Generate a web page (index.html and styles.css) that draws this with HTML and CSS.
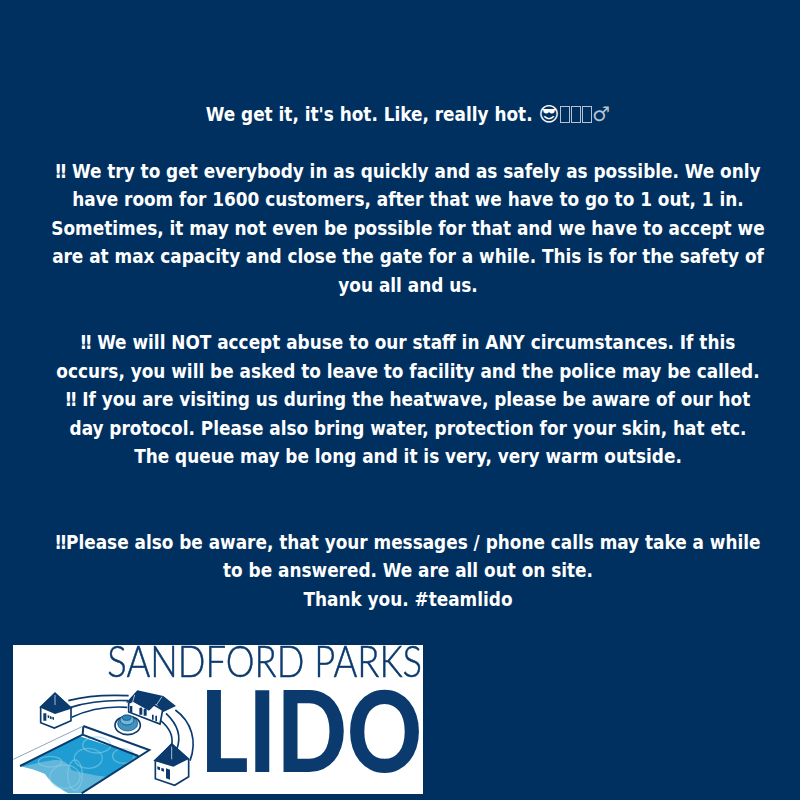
FILE: index.html
```html
<!DOCTYPE html>
<html lang="en">
<head>
<meta charset="utf-8">
<title>Sandford Parks Lido</title>
<link rel="stylesheet" href="styles.css">
</head>
<body>
<main class="poster">
  <p class="notice">We get it, it's hot. Like, really hot. <span class="glyphs">😎<span class="tofu"></span><span class="tofu"></span><span class="tofu"></span><span class="male">♂</span></span><br>
<br>
‼ We try to get everybody in as quickly and as safely as possible. We only<br>
have room for 1600 customers, after that we have to go to 1 out, 1 in.<br>
Sometimes, it may not even be possible for that and we have to accept we<br>
are at max capacity and close the gate for a while. This is for the safety of<br>
you all and us.<br>
<br>
‼ We will NOT accept abuse to our staff in ANY circumstances. If this<br>
occurs, you will be asked to leave to facility and the police may be called.<br>
‼ If you are visiting us during the heatwave, please be aware of our hot<br>
day protocol. Please also bring water, protection for your skin, hat etc.<br>
The queue may be long and it is very, very warm outside.<br>
<br>
<br>
‼Please also be aware, that your messages / phone calls may take a while<br>
to be answered. We are all out on site.<br>
Thank you. #teamlido</p>
  <svg class="logo" viewBox="39 45 1230 447" role="img" aria-label="Sandford Parks Lido logo">
    <rect class="paper" x="39" y="45" width="1230" height="447"/>
    <text class="logo-top" x="322" y="141" textLength="944" lengthAdjust="spacingAndGlyphs">SANDFORD PARKS</text>
    <text class="logo-main" x="600" y="425" textLength="666" lengthAdjust="spacingAndGlyphs">LIDO</text>

    <path class="water" d="M60 408 235 318 415 378 245 490H205C170 470 150 455 135 432 110 420 85 415 60 408Z"/>
    <path class="water-dark" d="M60 410 235 318 415 376 325 440C300 440 250 430 215 420 190 370 150 395 60 410Z"/>
    <g class="ripple">
      <ellipse cx="265" cy="385" rx="42" ry="30"/><ellipse cx="195" cy="440" rx="45" ry="35"/>
      <ellipse cx="290" cy="345" rx="42" ry="24"/><ellipse cx="370" cy="378" rx="32" ry="22"/>
      <ellipse cx="225" cy="435" rx="22" ry="45"/><ellipse cx="150" cy="395" rx="35" ry="16"/>
    </g>
    <path class="line" d="M250 288 448 360 245 490M250 288 248 314M248 314 415 378M60 408 248 314"/>
    <path class="line-soft" d="M40 388 250 288"/>

    <path class="thin" d="M205 212C265 196 325 194 386 197M212 232C270 214 330 210 384 212M215 262C270 236 325 228 382 232"/>
    <path class="thin" d="M526 240C575 275 592 335 570 392M498 250C535 285 545 320 530 358M482 272C510 295 520 320 515 345"/>

    <path class="wall" d="M122 232V278L163 294 213 272V236L165 190Z"/>
    <path class="roof" d="M165 187 118 232 165 252 218 235Z"/>
    <path class="roof" d="M130 250h9v22h-9zM143 255l5 2v8l-5-2zM150 258l5 2v8l-5-2zM157 260l5 2v8l-5-2z"/>

    <path class="wall" d="M386 220V246L480 282 488 240 420 200Z"/>
    <path class="roof" d="M378 218 412 181 490 198 528 228 490 246 468 222 447 242 400 216Z"/>
    <path class="roof" d="M390 228h7v20h-7zM418 235c3-4 9-3 9 2v17h-9zM431 238c3-4 9-3 9 2v17h-9zM456 254h5v15h-5zM466 257h5v17h-5z"/>
    <path class="white-line" d="M404 195 398 216M486 200 470 224"/>

    <ellipse class="wall" cx="383" cy="286" rx="38" ry="28"/>
    <ellipse class="pond" cx="383" cy="281" rx="30" ry="22"/>
    <ellipse class="pond-mid" cx="381" cy="270" rx="21" ry="15"/>
    <ellipse class="pond-top" cx="380" cy="263" rx="13" ry="8"/>

    <path class="wall" d="M466 394V446L524 466 566 440V388L515 342Z"/>
    <path class="roof" d="M515 340 460 392 520 410 568 386Z"/>
    <path class="roof" d="M472 409l8 3v9l-8-3zM484 413l8 3v9l-8-3zM498 415l12 4v30l-12-4z"/>
    <path class="white-line" d="M515 350V388M165 195V225"/>
  </svg>
</main>
</body>
</html>
```

FILE: styles.css
```css
html, body {
  margin: 0;
  padding: 0;
}

body {
  background: #00305f;
}

.poster {
  box-sizing: border-box;
  width: 800px;
  height: 800px;
  padding: 99.6px 0 6px 13px;
  background: #00305f;
  display: flex;
  flex-direction: column;
  justify-content: space-between;
  align-items: flex-start;
}

.notice {
  margin: 0 0 0 -13px;
  width: 816px;
  text-align: center;
  white-space: nowrap;
  color: #ffffff;
  font-family: "DejaVu Sans", sans-serif;
  font-stretch: condensed;
  font-weight: 700;
  font-size: 18.8px;
  line-height: 28.55px;
}

.glyphs {
  font-family: "DejaVu Sans", sans-serif;
  font-weight: 400;
  font-stretch: normal;
  font-size: 20px;
}

.tofu {
  display: inline-block;
  box-sizing: border-box;
  width: 10px;
  height: 17px;
  margin-left: 1px;
  vertical-align: -2px;
  border: 1px solid #b4c2d2;
}

.male {
  margin-left: 0;
  color: #b4c2d2;
}

.logo {
  display: block;
  width: 410px;
  height: 149px;
  flex: none;
  filter: blur(0.3px);
}

.paper { fill: #ffffff; }
.logo-top {
  font-family: Lato, "Liberation Sans", sans-serif;
  font-weight: 300;
  font-size: 130px;
  fill: #0a3a6e;
  stroke: #0a3a6e;
  stroke-width: 1.5;
}
.logo-main {
  font-family: Lato, "Liberation Sans", sans-serif;
  font-weight: 900;
  font-size: 335px;
  fill: #0a3a6e;
}
.water { fill: #62b6da; }
.water-dark { fill: #1f9dd2; }
.ripple ellipse { fill: none; stroke: #8ccde6; stroke-width: 4; opacity: 0.55; }
.line { fill: none; stroke: #0a3a6e; stroke-width: 6; }
.line-soft { fill: none; stroke: #8ea6bf; stroke-width: 3; }
.thin { fill: none; stroke: #0a3a6e; stroke-width: 5; }
.wall { fill: #ffffff; stroke: #0a3a6e; stroke-width: 5; }
.roof { fill: #0a3a6e; }
.white-line { fill: none; stroke: #ffffff; stroke-width: 2; }
.pond { fill: #3f93c0; stroke: #0a3a6e; stroke-width: 2; }
.pond-mid { fill: #6fb6d8; stroke: #0a3a6e; stroke-width: 2; }
.pond-top { fill: #2e86b8; stroke: #0a3a6e; stroke-width: 2; }
```
